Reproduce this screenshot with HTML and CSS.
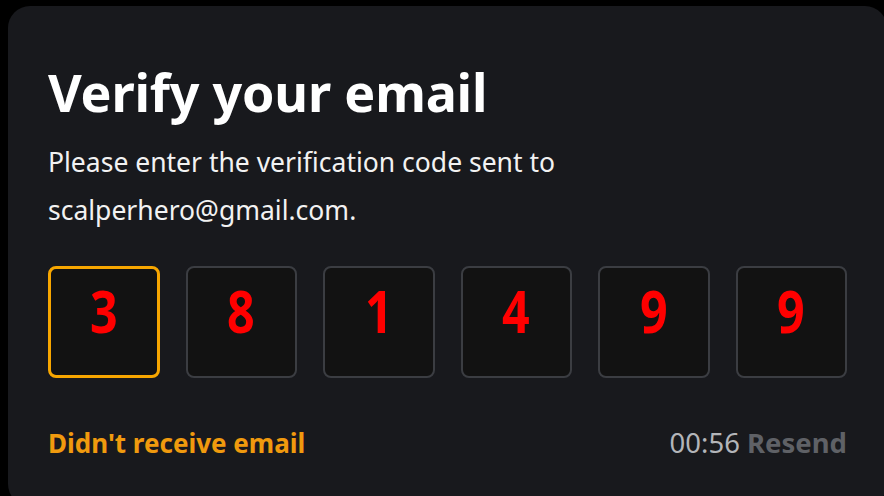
FILE: index.html
```html
<!DOCTYPE html>
<html lang="en">
<head>
  <meta charset="UTF-8">
  <meta name="viewport" content="width=device-width, initial-scale=1.0">
  <title>Verify your email</title>
  <link rel="stylesheet" href="styles.css">
</head>
<body>
  <div class="card">
    <h1>Verify your email</h1>
    <p class="desc">Please enter the verification code sent to<br>scalperhero@gmail.com.</p>

    <div class="code-row">
      <div class="code-box active"><span>3</span></div>
      <div class="code-box"><span>8</span></div>
      <div class="code-box"><span>1</span></div>
      <div class="code-box"><span>4</span></div>
      <div class="code-box"><span>9</span></div>
      <div class="code-box"><span>9</span></div>
    </div>

    <div class="footer">
      <a class="no-email" href="#">Didn't receive email</a>
      <div class="resend">
        <span class="timer">00:56</span>
        <span class="resend-btn">Resend</span>
      </div>
    </div>
  </div>
</body>
</html>
```

FILE: styles.css
```css
html, body {
  margin: 0;
  padding: 0;
  background-color: #000;
  overflow: hidden;
}
body {
  font-family: 'Noto Sans', 'Open Sans', sans-serif;
  padding: 6px 0 0 8px;
}
.card {
  width: 879px;
  height: 500px;
  box-sizing: border-box;
  background-color: #18191d;
  border-radius: 22px;
  padding: 53px 40px 0 40px;
  color: #fff;
}
h1 {
  margin: 0;
  font-size: 52px;
  font-weight: 700;
  line-height: 66px;
  letter-spacing: -0.2px;
}
.desc {
  margin: 13px 0 0 0;
  font-size: 26.5px;
  line-height: 48px;
  color: #f2f2f2;
}
.code-row {
  display: flex;
  gap: 26px;
  margin-top: 32px;
}
.code-box {
  width: 112px;
  height: 112px;
  box-sizing: border-box;
  border: 2px solid #3b3d42;
  border-radius: 8px;
  background-color: #121212;
  color: #ff0000;
  font-family: 'Open Sans', sans-serif;
  font-weight: 700;
  font-size: 59px;
  display: flex;
  align-items: center;
  justify-content: center;
}
.code-box span {
  display: inline-block;
  transform: scaleX(0.82);
  margin-top: -24px;
}
.code-box.active {
  border: 3px solid #f7a600;
}
.footer {
  display: flex;
  justify-content: space-between;
  align-items: center;
  margin-top: 46px;
  width: 799px;
  font-size: 26px;
}
.no-email {
  color: #f09a0e;
  font-weight: 700;
  text-decoration: none;
}
.resend {
  font-size: 27.5px;
}
.timer {
  color: #b3b5b9;
}
.resend-btn {
  color: #5f6166;
  font-weight: 700;
}
```
